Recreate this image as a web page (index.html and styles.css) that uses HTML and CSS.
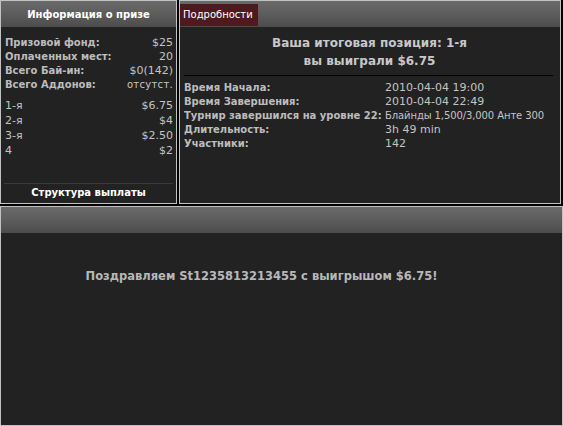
FILE: index.html
```html
<!DOCTYPE html>
<html lang="ru">
<head>
<meta charset="utf-8">
<link rel="stylesheet" href="styles.css">
</head>
<body>
<div class="top">
  <section class="panel prize">
    <header class="head center"><span class="title">Информация о призе</span></header>
    <div class="prize-body">
      <div class="row"><b>Призовой фонд:</b><span>$25</span></div>
      <div class="row"><b>Оплаченных мест:</b><span>20</span></div>
      <div class="row"><b>Всего Бай-ин:</b><span>$0(142)</span></div>
      <div class="row"><b>Всего Аддонов:</b><span class="small">отсутст.</span></div>
      <div class="places">
        <div class="row"><span>1-я</span><span>$6.75</span></div>
        <div class="row"><span>2-я</span><span>$4</span></div>
        <div class="row"><span>3-я</span><span>$2.50</span></div>
        <div class="row"><span>4</span><span>$2</span></div>
      </div>
    </div>
    <footer class="foot">Структура выплаты</footer>
  </section>
  <section class="panel details">
    <header class="head"><span class="tab">Подробности</span></header>
    <div class="details-body">
      <div class="result">
        <div>Ваша итоговая позиция: 1-я</div>
        <div>вы выиграли $6.75</div>
      </div>
      <div class="info">
        <b>Время Начала:</b><span>2010-04-04 19:00</span>
        <b>Время Завершения:</b><span>2010-04-04 22:49</span>
        <b>Турнир завершился на уровне 22:</b><span class="narrow">Блайнды 1,500/3,000 Анте 300</span>
        <b>Длительность:</b><span>3h 49 min</span>
        <b>Участники:</b><span>142</span>
      </div>
    </div>
  </section>
</div>
<section class="panel bottom">
  <header class="head"></header>
  <div class="message">Поздравляем St1235813213455 с выигрышом $6.75!</div>
</section>
</body>
</html>
```
FILE: styles.css
```css
html, body {
  margin: 0;
  padding: 0;
  background: #000;
}
body {
  width: 563px;
  height: 426px;
  display: flex;
  flex-direction: column;
  gap: 2px;
  font-family: "DejaVu Sans", "Liberation Sans", sans-serif;
  font-size: 11px;
  color: #c4c4c4;
  overflow: hidden;
}
.top {
  display: flex;
  gap: 1px;
  height: 204px;
}
.panel {
  background: #222;
  border: 1px solid #c2c2c2;
  box-sizing: border-box;
  display: flex;
  flex-direction: column;
}
.head {
  height: 26px;
  flex: none;
  background: linear-gradient(#6a6a6a, #5e5e5e 45%, #4c4c4c);
  box-sizing: border-box;
  display: flex;
  align-items: center;
}
.head.center { justify-content: center; }
.title {
  color: #fff;
  font-weight: bold;
  font-size: 10px;
}
.prize {
  flex: none;
  width: 177px;
}
.prize-body {
  flex: 1;
  padding: 9px 3px 0 4px;
}
.row {
  display: flex;
  justify-content: space-between;
  height: 14px;
  line-height: 14px;
}
.row b {
  font-weight: bold;
  color: #bcbcbc;
  font-size: 10px;
}
.row span { color: #c4c4c4; }
.row .small { font-size: 10px; letter-spacing: 0.3px; }
.places {
  margin-top: 6px;
}
.places .row {
  height: 15px;
  line-height: 15px;
}
.foot {
  border-top: 1px solid #3a3a3a;
  height: 19px;
  line-height: 18px;
  text-align: center;
  color: #fff;
  font-weight: bold;
  font-size: 10px;
  margin: 0 3px;
}
.details {
  flex: 1;
  min-width: 0;
  margin-left: 1px;
  margin-right: 2px;
}
.tab {
  margin: 3px 0 0 0;
  height: 22px;
  line-height: 22px;
  padding: 0 5px 0 3px;
  background: #4e1a1e;
  color: #fff;
  font-size: 10px;
  align-self: flex-start;
}
.details-body {
  padding: 7px 7px 0 4px;
}
.result {
  text-align: center;
  font-weight: bold;
  font-size: 12px;
  line-height: 18px;
  color: #c8c8c8;
  padding-left: 2px;
  padding-bottom: 5px;
  border-bottom: 1px solid #000;
}
.info {
  margin-top: 5px;
  display: grid;
  grid-template-columns: 201px 1fr;
  line-height: 14px;
}
.info b { color: #bcbcbc; font-size: 10px; white-space: nowrap; }
.info span { color: #c4c4c4; white-space: nowrap; }
.info .narrow { font-size: 10px; letter-spacing: -0.1px; }
.bottom {
  flex: 1;
}
.message {
  padding-top: 36px;
  text-align: center;
  font-weight: bold;
  font-size: 11.5px;
  color: #b8b8b8;
  padding-right: 40px;
}
```
